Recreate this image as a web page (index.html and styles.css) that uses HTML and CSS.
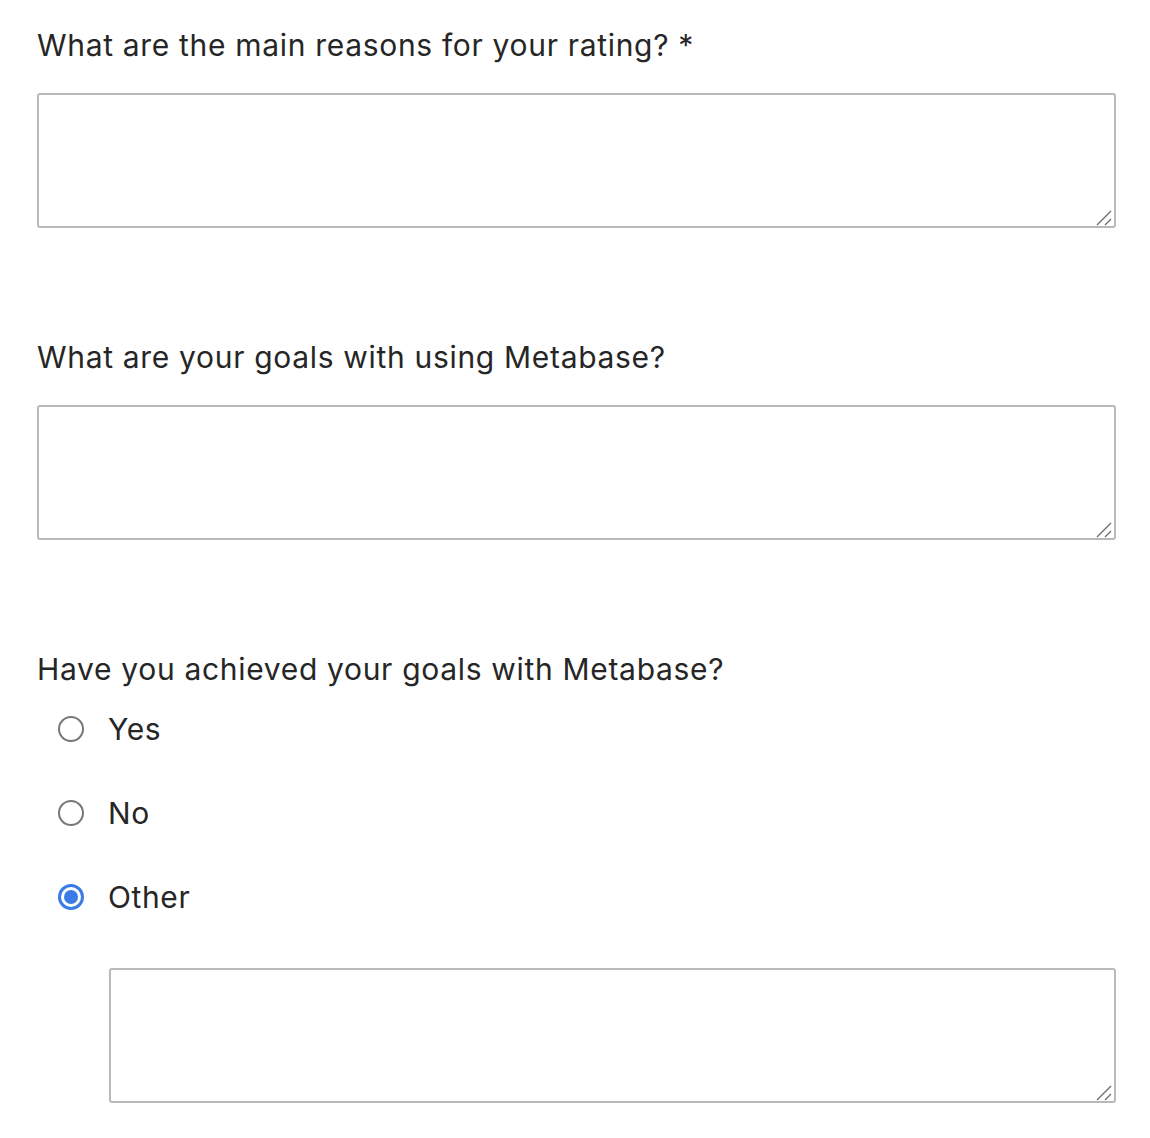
FILE: index.html
```html
<!DOCTYPE html>
<html lang="en">
<head>
<meta charset="utf-8">
<title>Survey</title>
<link rel="stylesheet" href="styles.css">
</head>
<body>
<form class="survey">
  <div class="question">
    <label class="q-label" for="reasons">What are the main reasons for your rating? *</label>
    <div class="field">
      <textarea id="reasons" class="q-text"></textarea>
      <svg class="grip" width="16" height="16" viewBox="0 0 16 16"><path d="M1 15 L15 1 M9 15 L15 9" stroke="#6b6b6b" stroke-width="1.3" fill="none"/></svg>
    </div>
  </div>
  <div class="question">
    <label class="q-label" for="goals">What are your goals with using Metabase?</label>
    <div class="field">
      <textarea id="goals" class="q-text"></textarea>
      <svg class="grip" width="16" height="16" viewBox="0 0 16 16"><path d="M1 15 L15 1 M9 15 L15 9" stroke="#6b6b6b" stroke-width="1.3" fill="none"/></svg>
    </div>
  </div>
  <div class="question">
    <div class="q-label">Have you achieved your goals with Metabase?</div>
    <div class="options">
      <label class="option"><span class="radio"></span><span class="opt-text">Yes</span></label>
      <label class="option"><span class="radio"></span><span class="opt-text">No</span></label>
      <label class="option"><span class="radio checked"></span><span class="opt-text">Other</span></label>
    </div>
    <div class="field other">
      <textarea class="q-text"></textarea>
      <svg class="grip" width="16" height="16" viewBox="0 0 16 16"><path d="M1 15 L15 1 M9 15 L15 9" stroke="#6b6b6b" stroke-width="1.3" fill="none"/></svg>
    </div>
  </div>
</form>
</body>
</html>
```
FILE: styles.css
```css
html, body {
  margin: 0;
  padding: 0;
  background: #fff;
}
body {
  font-family: Inter, "Liberation Sans", sans-serif;
  color: #262626;
}
.survey {
  display: flex;
  flex-direction: column;
  gap: 111px;
  padding: 27px 35px 0 37px;
}
.question {
  display: flex;
  flex-direction: column;
}
.q-label {
  display: block;
  font-size: 30px;
  line-height: 36px;
  letter-spacing: 0.68px;
  margin-bottom: 30px;
}
.field {
  position: relative;
}
.q-text {
  display: block;
  box-sizing: border-box;
  width: 1079px;
  height: 135px;
  border: 2px solid #b9b9b9;
  border-radius: 3px;
  background: #fff;
  resize: none;
  outline: none;
  margin: 0;
  padding: 8px;
  font: inherit;
}
.grip {
  position: absolute;
  right: 3px;
  bottom: 2px;
}
.options {
  display: flex;
  flex-direction: column;
  gap: 48px;
  margin-top: -6px;
}
.option {
  display: flex;
  align-items: center;
  height: 36px;
  padding-left: 21px;
}
.radio {
  box-sizing: border-box;
  width: 26px;
  height: 26px;
  border: 2px solid #777;
  border-radius: 50%;
  flex: none;
  display: flex;
  align-items: center;
  justify-content: center;
}
.radio.checked {
  border: 3px solid #3a7be8;
}
.radio.checked::after {
  content: "";
  width: 14px;
  height: 14px;
  border-radius: 50%;
  background: #3a7be8;
}
.opt-text {
  margin-left: 24px;
  font-size: 30px;
  line-height: 36px;
  letter-spacing: 0.6px;
}
.other {
  margin-top: 53px;
  margin-left: 72px;
}
.other .q-text {
  width: 1007px;
}
```
